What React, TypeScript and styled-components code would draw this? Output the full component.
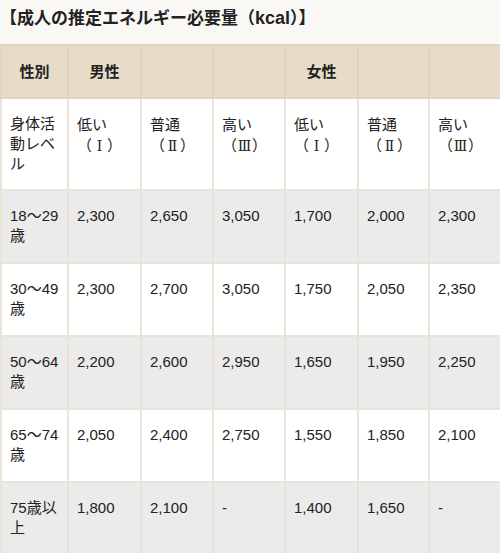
import styled, { createGlobalStyle } from 'styled-components';

const GlobalStyle = createGlobalStyle`
  html, body {
    margin: 0;
    padding: 0;
    background: #faf8f5;
  }
  body {
    font-family: "Liberation Sans", "Noto Sans CJK JP", sans-serif;
    color: #222222;
  }
`;

const Wrapper = styled.div`
  width: 500px;
  background: #faf8f5;
`;

const Title = styled.h3`
  margin: 0;
  padding: 6px 0 15px 0;
  font-size: 17px;
  line-height: 22px;
  font-weight: bold;
  color: #222222;
  white-space: nowrap;
  font-family: "Noto Sans CJK JP", sans-serif;

  span {
    font-family: "Liberation Sans", sans-serif;
    font-size: 18px;
  }
`;

const Table = styled.table`
  width: 500px;
  table-layout: fixed;
  border-collapse: collapse;
  font-size: 15px;
  line-height: 20px;
`;

const HeadCell = styled.th`
  background: #e8dcc9;
  border: 2px solid #e2d5c0;
  height: 51px;
  padding: 0 8px;
  font-weight: bold;
  text-align: center;
  vertical-align: middle;
`;

const Row = styled.tr<{ $shaded?: boolean }>`
  background: ${props => props.$shaded ? '#ebebeb' : '#ffffff'};
`;

const Cell = styled.td`
  border: 2px solid #ebe3d6;
  padding: 15px 8px 15px 8px;
  height: 41px;
  vertical-align: top;
  text-align: left;
  word-break: break-all;
`;

const Level = styled.span`
  font-family: "Noto Sans CJK JP", sans-serif;
`;

const Paren = styled.span`
  white-space: nowrap;
`;

const Numeral = styled.span`
  display: inline-block;
  width: 15px;
  text-align: center;
  font-family: "DejaVu Serif", "Noto Sans CJK JP", serif;
  font-size: 14px;
`;

const widths = [67, 73, 72, 72, 73, 71, 72];

const rows = [
  ['18〜29歳', '2,300', '2,650', '3,050', '1,700', '2,000', '2,300'],
  ['30〜49歳', '2,300', '2,700', '3,050', '1,750', '2,050', '2,350'],
  ['50〜64歳', '2,200', '2,600', '2,950', '1,650', '1,950', '2,250'],
  ['65〜74歳', '2,050', '2,400', '2,750', '1,550', '1,850', '2,100'],
  ['75歳以上', '1,800', '2,100', '-', '1,400', '1,650', '-'],
];

const levels = [
  { word: '低い', num: 'Ⅰ' },
  { word: '普通', num: 'Ⅱ' },
  { word: '高い', num: 'Ⅲ' },
];

function App() {
  return (
    <Wrapper>
      <GlobalStyle />
      <Title>【成人の推定エネルギー必要量（<span>kcal</span>）】</Title>
      <Table>
        <colgroup>
          {widths.map((w, i) => <col key={i} style={{ width: w }} />)}
        </colgroup>
        <thead>
          <tr>
            <HeadCell>性別</HeadCell>
            <HeadCell>男性</HeadCell>
            <HeadCell></HeadCell>
            <HeadCell></HeadCell>
            <HeadCell>女性</HeadCell>
            <HeadCell></HeadCell>
            <HeadCell></HeadCell>
          </tr>
        </thead>
        <tbody>
          <Row>
            <Cell>身体活動レベル</Cell>
            {[...levels, ...levels].map((l, i) => (
              <Cell key={i}>
                <Level>
                  {l.word}
                  <Paren>（<Numeral>{l.num}</Numeral>）</Paren>
                </Level>
              </Cell>
            ))}
          </Row>
          {rows.map((r, i) => (
            <Row key={i} $shaded={i % 2 === 0}>
              {r.map((v, j) => <Cell key={j}>{v}</Cell>)}
            </Row>
          ))}
        </tbody>
      </Table>
    </Wrapper>
  );
}

export default App;
